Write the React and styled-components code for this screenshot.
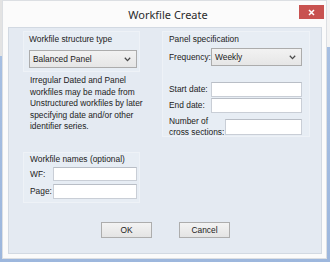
import React from "react";
import styled, { createGlobalStyle } from "styled-components";

const GlobalStyle = createGlobalStyle`
  html, body { margin: 0; padding: 0; }
  body {
    width: 330px;
    height: 262px;
    overflow: hidden;
    background:
      linear-gradient(#e3e3e3, #e3e3e3) no-repeat 0 0 / 2px 56px,
      linear-gradient(#f4f4f4, #f4f4f4) no-repeat 100% 0 / 3px 47px,
      linear-gradient(180deg, #a9c1e3, #9db7dd);
    font-family: "Liberation Sans", Arial, sans-serif;
    color: #222222;
  }
`;

const Window = styled.div`
  margin-left: 2px;
  width: 325px;
  height: 259px;
  box-sizing: border-box;
  background: #fbfbfb;
  border: 1px solid #dcdfe3;
  padding: 0 4px 4px 5px;
  display: flex;
  flex-direction: column;
`;

const TitleBar = styled.div`
  height: 26px;
  display: grid;
  grid-template-columns: 1fr auto 1fr;
  margin-right: -2px;
`;

const Title = styled.div`
  grid-column: 2;
  font-family: "Noto Sans", "Open Sans", sans-serif;
  font-size: 11px;
  line-height: 27px;
  color: #2b2b2b;
  padding-left: 4px;
`;

const CloseButton = styled.div`
  grid-column: 3;
  justify-self: end;
  margin-top: 4px;
  width: 25px;
  height: 14px;
  background: #c85250;
  display: flex;
  align-items: center;
  justify-content: center;
`;

const Client = styled.div`
  flex: 1;
  background: #e4eaf2;
  border: 1px solid #d2d9e2;
  display: flex;
  flex-direction: column;
  font-size: 8.4px;
`;

const Columns = styled.div`
  display: grid;
  grid-template-columns: 117px 148px;
  column-gap: 22px;
  padding-left: 14px;
  padding-top: 3px;
`;

const Column = styled.div`
  display: flex;
  flex-direction: column;
`;

const Group = styled.div`
  box-sizing: border-box;
  height: ${(p) => p.h}px;
  margin-top: ${(p) => p.mt || 0}px;
  border: 1px solid #eef2f7;
  background: #e7edf4;
  padding: ${(p) => p.pt}px 0 0 ${(p) => p.pl}px;
  display: flex;
  flex-direction: column;
`;

const GroupLabel = styled.div`
  line-height: 11px;
  height: 11px;
  white-space: nowrap;
`;

const Select = styled.div`
  box-sizing: border-box;
  width: ${(p) => p.w}px;
  height: 18px;
  margin-top: ${(p) => p.mt || 0}px;
  border: 1px solid #acacac;
  background: linear-gradient(#f2f2f2, #e6e6e6);
  display: flex;
  align-items: center;
  justify-content: space-between;
  padding: 0 5px 0 3px;
  white-space: nowrap;
`;

const Paragraph = styled.p`
  margin: 3px 0 0;
  padding-left: 7px;
  line-height: 11.6px;
  white-space: nowrap;
`;

const Row = styled.div`
  display: flex;
  align-items: center;
  margin-top: ${(p) => p.mt || 0}px;
`;

const FieldLabel = styled.div`
  width: ${(p) => p.w}px;
  flex: none;
  line-height: 10.5px;
  white-space: nowrap;
`;

const Input = styled.div`
  box-sizing: border-box;
  width: ${(p) => p.w}px;
  height: ${(p) => p.h || 15}px;
  background: #ffffff;
  border: 1px solid #c9ced6;
  border-top-color: #b9bec6;
`;

const ButtonRow = styled.div`
  display: flex;
  justify-content: center;
  gap: 27px;
  margin-top: 19px;
  padding-left: 1px;
`;

const Button = styled.div`
  box-sizing: border-box;
  width: 51px;
  height: 16px;
  border: 1px solid #adadad;
  background: linear-gradient(#f3f3f3, #e4e4e4);
  display: flex;
  align-items: center;
  justify-content: center;
  font-size: 8.4px;
`;

const Chevron = () => (
  <svg width="7" height="5" viewBox="0 0 7 5">
    <path d="M0.8 0.8 L3.5 3.6 L6.2 0.8" fill="none" stroke="#4a4a4a" strokeWidth="1.3" />
  </svg>
);

export default function App() {
  return (
    <>
      <GlobalStyle />
      <Window>
        <TitleBar>
          <Title>Workfile Create</Title>
          <CloseButton>
            <svg width="7" height="7" viewBox="0 0 7 7">
              <path d="M1 1 L6 6 M6 1 L1 6" stroke="#ffffff" strokeWidth="1.5" />
            </svg>
          </CloseButton>
        </TitleBar>
        <Client>
          <Columns>
            <Column>
              <Group h={41} pt={2} pl={5}>
                <GroupLabel>Workfile structure type</GroupLabel>
                <Select w={108} mt={5}>
                  <span>Balanced Panel</span>
                  <Chevron />
                </Select>
              </Group>
              <Paragraph>
                Irregular Dated and Panel
                <br />
                workfiles may be made from
                <br />
                Unstructured workfiles by later
                <br />
                specifying date and/or other
                <br />
                identifier series.
              </Paragraph>
              <Group h={51} mt={19} pt={1} pl={6}>
                <GroupLabel>Workfile names (optional)</GroupLabel>
                <Row mt={2}>
                  <FieldLabel w={23}>WF:</FieldLabel>
                  <Input w={84} h={14} />
                </Row>
                <Row mt={3}>
                  <FieldLabel w={23}>Page:</FieldLabel>
                  <Input w={84} h={15} />
                </Row>
              </Group>
            </Column>
            <Column>
              <Group h={106} pt={2} pl={6}>
                <GroupLabel>Panel specification</GroupLabel>
                <Row mt={3}>
                  <FieldLabel w={42}>Frequency:</FieldLabel>
                  <Select w={91}>
                    <span>Weekly</span>
                    <Chevron />
                  </Select>
                </Row>
                <Row mt={16}>
                  <FieldLabel w={42}>Start date:</FieldLabel>
                  <Input w={91} />
                </Row>
                <Row mt={1}>
                  <FieldLabel w={42}>End date:</FieldLabel>
                  <Input w={91} />
                </Row>
                <Row mt={3}>
                  <FieldLabel w={56}>
                    Number of
                    <br />
                    cross sections:
                  </FieldLabel>
                  <Input w={77} h={16} />
                </Row>
              </Group>
            </Column>
          </Columns>
          <ButtonRow>
            <Button>OK</Button>
            <Button>Cancel</Button>
          </ButtonRow>
        </Client>
      </Window>
    </>
  );
}
